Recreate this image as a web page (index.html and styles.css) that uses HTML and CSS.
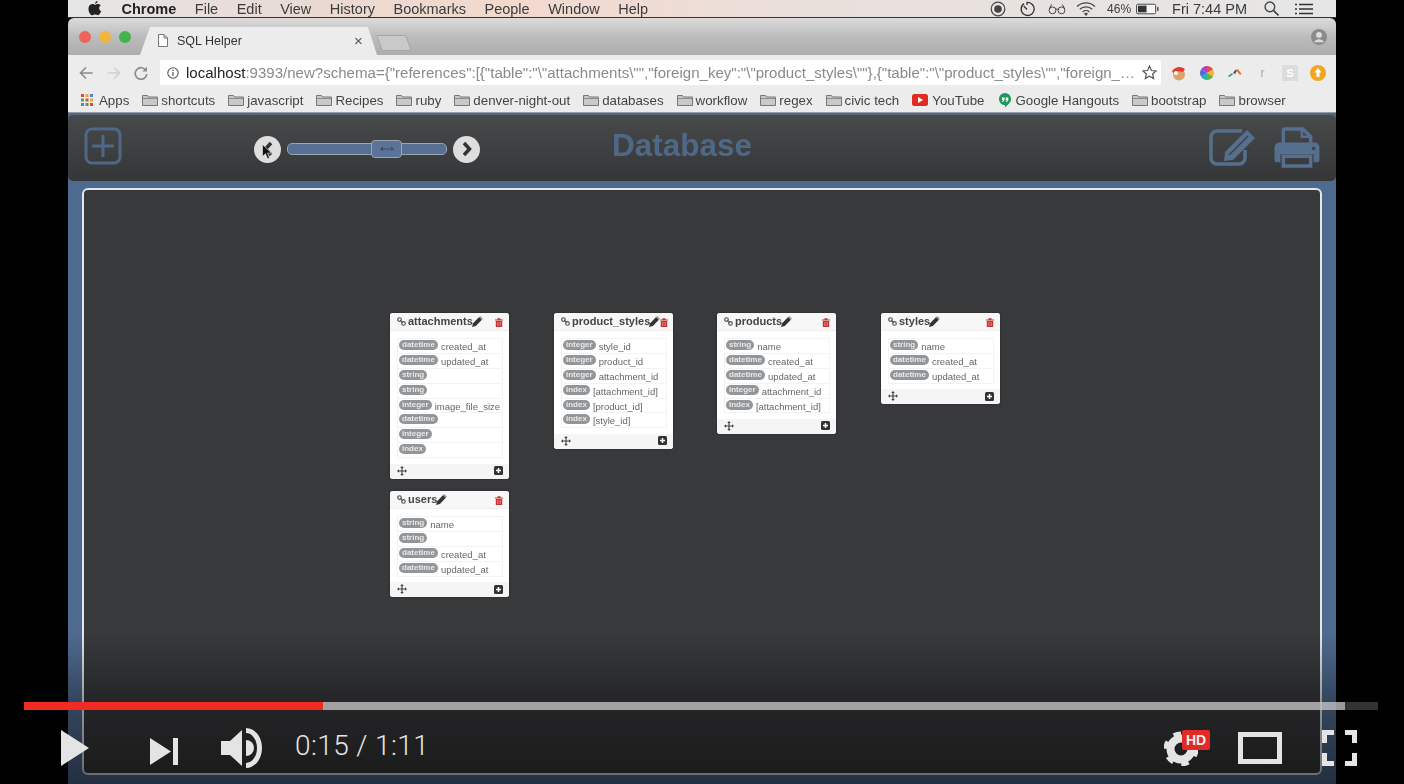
FILE: index.html
```html
<!DOCTYPE html>
<html lang="en">
<head>
    <meta charset="UTF-8">
    <title>SQL Helper</title>
    <link rel="stylesheet" href="styles.css">
</head>
<body>
    <svg class="defs" width="0" height="0">
        <symbol id="folder" viewBox="0 0 16 12"><path d="M.5 11.500V1.500h5l1 1.500h9v8.500z" fill="#c9c9c9" stroke="#777"/><path d="M1 4.500h14" stroke="#8d8d8d"/></symbol>
        <symbol id="link" viewBox="0 0 10 10"><circle cx="2.800" cy="2.800" r="2" fill="none" stroke="#555" stroke-width="1.300"/><circle cx="7.200" cy="7.200" r="2" fill="none" stroke="#555" stroke-width="1.300"/><path d="M3.500 3.500l3 3" stroke="#555" stroke-width="1.300"/></symbol>
        <symbol id="pencil" viewBox="0 0 10 10"><path d="M0 10l1-3.500L6.500 1 9 3.500 3.500 9z" fill="#333"/><path d="M7.500 0L10 2.500 9 3.500 6.500 1z" fill="#999"/></symbol>
        <symbol id="trash" viewBox="0 0 8 9"><path d="M0 1.500h8v1H0zM2.500.2h3v1.300h-3zM.8 3h6.400v6H.8z" fill="#c6322d"/><path d="M2.500 4v4M4 4v4M5.500 4v4" stroke="#e79a97" stroke-width=".6"/></symbol>
        <symbol id="move" viewBox="0 0 10 10"><path d="M5 0l1.800 2H5.600v2.400H8V3.200L10 5 8 6.800V5.600H5.600V8h1.200L5 10 3.200 8h1.200V5.600H2v1.200L0 5l2-1.800v1.200h2.400V2H3.200z" fill="#444"/></symbol>
        <symbol id="plus-box" viewBox="0 0 9 9"><rect width="9" height="9" rx="1.500" fill="#333"/><path d="M4.500 2v5M2 4.500h5" stroke="#fff" stroke-width="1.500"/></symbol>
    </svg>

    <div class="screen">
        <div class="menu-bar">
            <svg class="apple" viewBox="0 0 14 16"><path d="M9.800 0c.1 1.400-1.200 2.900-2.700 2.800C7 1.400 8.400.1 9.800 0zM7 4c.7 0 1.800-.9 3.200-.8 1.200 0 2.300.6 2.900 1.500-2.500 1.500-2.100 5 .6 6.100-.7 1.800-2.200 4.400-3.700 4.400-1 0-1.500-.7-2.800-.7s-1.900.7-2.800.7C2.400 15.700 0 11.800 0 8.500c0-3.200 2-5.100 4-5.200 1.200-.1 2.300.7 3 .7z" fill="#222"/></svg>
            <span class="menu-app">Chrome</span>
            <span>File</span>
            <span>Edit</span>
            <span>View</span>
            <span>History</span>
            <span>Bookmarks</span>
            <span>People</span>
            <span>Window</span>
            <span>Help</span>
            <div class="menu-status">
                <svg class="st-icon" viewBox="0 0 16 16"><circle cx="8" cy="8" r="6.800" fill="none" stroke="#444" stroke-width="1.200"/><circle cx="8" cy="8" r="3.800" fill="#444"/></svg>
                <svg class="st-icon st-timer" viewBox="0 0 16 16"><path d="M5 2.600A6.500 6.500 0 1 0 8 1.500V4" fill="none" stroke="#333" stroke-width="1.300"/><path d="M4.800 5L8 8.500" stroke="#333" stroke-width="1.300"/></svg>
                <svg class="st-glasses" viewBox="0 0 20 12"><circle cx="5" cy="7.500" r="3.800" fill="none" stroke="#444" stroke-width="1.100"/><circle cx="15" cy="7.500" r="3.800" fill="none" stroke="#444" stroke-width="1.100"/><path d="M8.500 6.500q1.500-1 3 0M1.500 6L4 1M18.500 6L16 1" fill="none" stroke="#444" stroke-width="1.100"/></svg>
                <svg class="st-wifi" viewBox="0 0 20 15"><path d="M1 5.500a13 13 0 0 1 18 0M3.800 8.300a9 9 0 0 1 12.400 0M6.600 11a5 5 0 0 1 6.800 0" fill="none" stroke="#444" stroke-width="1.200"/><path d="M10 15l-2-2.300a3 3 0 0 1 4 0z" fill="#444"/></svg>
                <span class="st-battery-label">46%</span>
                <svg class="st-battery" viewBox="0 0 24 12"><rect x=".5" y="1" width="20" height="10" rx="1.500" fill="#f4f4f4" stroke="#444"/><rect x="2" y="2.500" width="9" height="7" fill="#333"/><rect x="22" y="4" width="1.500" height="4" fill="#444"/></svg>
                <span class="st-clock">Fri 7:44 PM</span>
                <svg class="st-search" viewBox="0 0 14 14"><circle cx="5.500" cy="5.500" r="4.500" fill="none" stroke="#444" stroke-width="1.300"/><path d="M9 9l4.500 4.500" stroke="#444" stroke-width="1.500"/></svg>
                <svg class="st-list" viewBox="0 0 18 12"><path d="M4 1.500h14M4 6h14M4 10.500h14M0 1.500h2M0 6h2M0 10.500h2" stroke="#333" stroke-width="1.700"/></svg>
            </div>
        </div>

        <div class="tab-bar">
            <div class="traffic"><i class="red"></i><i class="yellow"></i><i class="green"></i></div>
            <div class="tab">
                <svg class="tab-file" viewBox="0 0 10 13"><path d="M.5.500h5.500l3.500 3.500v8.500h-9zM6 .5V4h3.500" fill="#fff" stroke="#777"/></svg>
                <span class="tab-title">SQL Helper</span>
                <span class="tab-close">×</span>
            </div>
            <div class="new-tab"></div>
            <svg class="profile" viewBox="0 0 14 14"><circle cx="7" cy="7" r="7" fill="#8b8b8b"/><circle cx="7" cy="5.200" r="2.500" fill="#ddd"/><path d="M2.800 11q4.200-4 8.400 0v.5H2.800z" fill="#ddd"/></svg>
        </div>

        <div class="toolbar">
            <svg class="nav-icon" viewBox="0 0 14 14"><path d="M13.500 7H2M7 1.500L1.500 7 7 12.500" fill="none" stroke="#8a8a8a" stroke-width="1.600"/></svg>
            <svg class="nav-icon nav-off" viewBox="0 0 14 14"><path d="M.5 7H12M7 1.500L12.500 7 7 12.500" fill="none" stroke="#d0d0d0" stroke-width="1.600"/></svg>
            <svg class="nav-icon" viewBox="0 0 14 14"><path d="M12 4.500A5.800 5.800 0 1 0 12.800 8" fill="none" stroke="#8a8a8a" stroke-width="1.600"/><path d="M13 .8v4.700H8.300z" fill="#8a8a8a"/></svg>
            <div class="address">
                <svg class="info" viewBox="0 0 12 12"><circle cx="6" cy="6" r="5.200" fill="none" stroke="#555" stroke-width="1.100"/><path d="M6 5v4M6 2.800v1.300" stroke="#555" stroke-width="1.200"/></svg>
                <div class="url"><b>localhost</b>:9393/new?schema={"references":[{"table":"\"attachments\"","foreign_key":"\"product_styles\""},{"table":"\"product_styles\"","foreign_…</div>
                <svg class="star" viewBox="0 0 14 14"><path d="M7 1l1.800 4.100 4.400.4-3.300 2.900 1 4.300L7 10.400l-3.900 2.300 1-4.300L.8 5.500l4.400-.4z" fill="none" stroke="#555" stroke-width="1.100"/></svg>
            </div>
            <div class="extensions">
                <svg class="ext" viewBox="0 0 16 16"><circle cx="8" cy="9.500" r="6" fill="#dca36b"/><path d="M1 6q6-7 13-2l-2 3q-5-2-10 1z" fill="#e23a2e"/><circle cx="5" cy="8" r="2" fill="#fff"/></svg>
                <svg class="ext" viewBox="0 0 16 16"><path d="M8 8L8 1a7 7 0 0 1 6 3.500z" fill="#e9483b"/><path d="M8 8l6-3.500a7 7 0 0 1 0 7z" fill="#f0b52c"/><path d="M8 8l6 3.500A7 7 0 0 1 8 15z" fill="#5fb548"/><path d="M8 8v7a7 7 0 0 1-6-3.500z" fill="#2fb0a5"/><path d="M8 8l-6 3.500a7 7 0 0 1 0-7z" fill="#3f71d6"/><path d="M8 8L2 4.500A7 7 0 0 1 8 1z" fill="#b23fc4"/></svg>
                <svg class="ext" viewBox="0 0 16 16"><path d="M1 11l4-3 1 1.500-4 2.500z" fill="#2a9a8a"/><path d="M6 8l2.500-3.500L10 6 8 9z" fill="#555"/><path d="M9 5l2-1 3.500 5-1.500 1z" fill="#e2703a"/></svg>
                <span class="ext-r">r</span>
                <span class="ext-s">S</span>
                <svg class="ext" viewBox="0 0 16 16"><circle cx="8" cy="8" r="8" fill="#f2a51f"/><path d="M8 3l3.500 4.500H9.500V12h-3V7.500H4.500z" fill="#fff"/></svg>
            </div>
        </div>

        <div class="bookmarks">
            <div class="bm bm-apps">
                <svg class="apps-grid" viewBox="0 0 12 12"><path d="M0 0h3v3H0z" fill="#e0483a"/><path d="M4.500 0h3v3h-3z" fill="#e9a825"/><path d="M9 0h3v3H9z" fill="#4a86e0"/><path d="M0 4.500h3v3H0z" fill="#4aa35a"/><path d="M4.500 4.500h3v3h-3z" fill="#e0483a"/><path d="M9 4.500h3v3H9z" fill="#e9a825"/><path d="M0 9h3v3H0z" fill="#4a86e0"/><path d="M4.500 9h3v3h-3z" fill="#4aa35a"/><path d="M9 9h3v3H9z" fill="#e0483a"/></svg>
                Apps
            </div>
            <div class="bm"><svg class="folder"><use href="#folder"/></svg>shortcuts</div>
            <div class="bm"><svg class="folder"><use href="#folder"/></svg>javascript</div>
            <div class="bm"><svg class="folder"><use href="#folder"/></svg>Recipes</div>
            <div class="bm"><svg class="folder"><use href="#folder"/></svg>ruby</div>
            <div class="bm"><svg class="folder"><use href="#folder"/></svg>denver-night-out</div>
            <div class="bm"><svg class="folder"><use href="#folder"/></svg>databases</div>
            <div class="bm"><svg class="folder"><use href="#folder"/></svg>workflow</div>
            <div class="bm"><svg class="folder"><use href="#folder"/></svg>regex</div>
            <div class="bm"><svg class="folder"><use href="#folder"/></svg>civic tech</div>
            <div class="bm"><svg class="bm-yt" viewBox="0 0 16 12"><rect width="16" height="12" rx="2.500" fill="#dd2c22"/><path d="M6 3l5 3-5 3z" fill="#fff"/></svg>YouTube</div>
            <div class="bm"><svg class="bm-hangouts" viewBox="0 0 14 16"><path d="M7 0a6.500 6.500 0 0 1 6.500 6.500C13.500 10 10 13 7 15.500V13A6.500 6.500 0 0 1 7 0z" fill="#1d9a5b"/><path d="M3.800 4.800h2.700v2.700L5 9.500H4l.7-2H3.800zM7.800 4.800h2.700v2.700L9 9.500H8l.7-2h-.9z" fill="#fff"/></svg>Google Hangouts</div>
            <div class="bm"><svg class="folder"><use href="#folder"/></svg>bootstrap</div>
            <div class="bm"><svg class="folder"><use href="#folder"/></svg>browser</div>
        </div>

        <div class="app">
            <div class="app-bar">
                <svg class="add-table" viewBox="0 0 38 38"><rect x="2" y="2" width="34" height="34" rx="6" fill="none" stroke="#4f6888" stroke-width="3"/><path d="M19 8v22M8 19h22" stroke="#4f6888" stroke-width="3"/></svg>
                <div class="slider">
                    <div class="slider-btn">
                        <svg class="chevron" viewBox="0 0 12 16"><path d="M9 2L3.500 8 9 14" fill="none" stroke="#333" stroke-width="3.500"/></svg>
                        <svg class="cursor" viewBox="0 0 10 16"><path d="M.5.500v12l3-2.800 2 5 2-.8-2-4.800h4z" fill="#111" stroke="#eee" stroke-width=".6"/></svg>
                    </div>
                    <div class="slider-track">
                        <div class="slider-handle"><svg viewBox="0 0 14 6" class="handle-arrows"><path d="M0 3l3-2.500V5zM14 3l-3-2.500V5zM2 2.600h10v.8H2z" fill="#3b4a5e"/></svg></div>
                    </div>
                    <div class="slider-btn">
                        <svg class="chevron" viewBox="0 0 12 16"><path d="M3 2l5.500 6L3 14" fill="none" stroke="#333" stroke-width="3.500"/></svg>
                    </div>
                </div>
                <h1 class="app-title">Database</h1>
                <div class="app-actions">
                    <svg class="edit-icon" viewBox="0 0 48 38"><path d="M33 3H8a6 6 0 0 0-6 6v21a6 6 0 0 0 6 6h22a6 6 0 0 0 6-6V22" fill="none" stroke="#55708f" stroke-width="3.500"/><path d="M16 24L38 2l8 8-22 22-9 1z" fill="#55708f"/><path d="M20 27l19-19" stroke="#3e4042" stroke-width="1.500"/></svg>
                    <svg class="print-icon" viewBox="0 0 46 42"><path d="M9 17V4a2 2 0 0 1 2-2h18l8 8v7" fill="none" stroke="#55708f" stroke-width="3.500"/><path d="M28 2v8h9" fill="none" stroke="#55708f" stroke-width="2.500"/><path d="M5 16h36a5 5 0 0 1 5 5v13a2 2 0 0 1-2 2h-4v-8H6v8H2a2 2 0 0 1-2-2V21a5 5 0 0 1 5-5z" fill="#55708f"/><path d="M9 30h28v10H9z" fill="none" stroke="#55708f" stroke-width="3.500"/><circle cx="40" cy="22" r="1.800" fill="#3e4042"/></svg>
                </div>
            </div>

            <div class="board-wrap">
                <div class="board">

                    <div class="node node-attachments">
                        <div class="node-head">
                            <svg class="ic-link"><use href="#link"/></svg><span class="node-name">attachments</span><svg class="ic-pencil"><use href="#pencil"/></svg>
                            <svg class="ic-trash"><use href="#trash"/></svg>
                        </div>
                        <div class="node-rows">
                            <div class="row"><span class="type">datetime</span><span class="col">created_at</span></div>
                            <div class="row"><span class="type">datetime</span><span class="col">updated_at</span></div>
                            <div class="row"><span class="type">string</span></div>
                            <div class="row"><span class="type">string</span></div>
                            <div class="row"><span class="type">integer</span><span class="col">image_file_size</span></div>
                            <div class="row"><span class="type">datetime</span></div>
                            <div class="row"><span class="type">integer</span></div>
                            <div class="row"><span class="type">index</span></div>
                        </div>
                        <div class="node-foot"><svg class="ic-move"><use href="#move"/></svg><svg class="ic-plus"><use href="#plus-box"/></svg></div>
                    </div>

                    <div class="node node-product-styles">
                        <div class="node-head">
                            <svg class="ic-link"><use href="#link"/></svg><span class="node-name">product_styles</span><svg class="ic-pencil"><use href="#pencil"/></svg>
                            <svg class="ic-trash"><use href="#trash"/></svg>
                        </div>
                        <div class="node-rows">
                            <div class="row"><span class="type">integer</span><span class="col">style_id</span></div>
                            <div class="row"><span class="type">integer</span><span class="col">product_id</span></div>
                            <div class="row"><span class="type">integer</span><span class="col">attachment_id</span></div>
                            <div class="row"><span class="type">index</span><span class="col">[attachment_id]</span></div>
                            <div class="row"><span class="type">index</span><span class="col">[product_id]</span></div>
                            <div class="row"><span class="type">index</span><span class="col">[style_id]</span></div>
                        </div>
                        <div class="node-foot"><svg class="ic-move"><use href="#move"/></svg><svg class="ic-plus"><use href="#plus-box"/></svg></div>
                    </div>

                    <div class="node node-products">
                        <div class="node-head">
                            <svg class="ic-link"><use href="#link"/></svg><span class="node-name">products</span><svg class="ic-pencil"><use href="#pencil"/></svg>
                            <svg class="ic-trash"><use href="#trash"/></svg>
                        </div>
                        <div class="node-rows">
                            <div class="row"><span class="type">string</span><span class="col">name</span></div>
                            <div class="row"><span class="type">datetime</span><span class="col">created_at</span></div>
                            <div class="row"><span class="type">datetime</span><span class="col">updated_at</span></div>
                            <div class="row"><span class="type">integer</span><span class="col">attachment_id</span></div>
                            <div class="row"><span class="type">index</span><span class="col">[attachment_id]</span></div>
                        </div>
                        <div class="node-foot"><svg class="ic-move"><use href="#move"/></svg><svg class="ic-plus"><use href="#plus-box"/></svg></div>
                    </div>

                    <div class="node node-styles">
                        <div class="node-head">
                            <svg class="ic-link"><use href="#link"/></svg><span class="node-name">styles</span><svg class="ic-pencil"><use href="#pencil"/></svg>
                            <svg class="ic-trash"><use href="#trash"/></svg>
                        </div>
                        <div class="node-rows">
                            <div class="row"><span class="type">string</span><span class="col">name</span></div>
                            <div class="row"><span class="type">datetime</span><span class="col">created_at</span></div>
                            <div class="row"><span class="type">datetime</span><span class="col">updated_at</span></div>
                        </div>
                        <div class="node-foot"><svg class="ic-move"><use href="#move"/></svg><svg class="ic-plus"><use href="#plus-box"/></svg></div>
                    </div>

                    <div class="node node-users">
                        <div class="node-head">
                            <svg class="ic-link"><use href="#link"/></svg><span class="node-name">users</span><svg class="ic-pencil"><use href="#pencil"/></svg>
                            <svg class="ic-trash"><use href="#trash"/></svg>
                        </div>
                        <div class="node-rows">
                            <div class="row"><span class="type">string</span><span class="col">name</span></div>
                            <div class="row"><span class="type">string</span></div>
                            <div class="row"><span class="type">datetime</span><span class="col">created_at</span></div>
                            <div class="row"><span class="type">datetime</span><span class="col">updated_at</span></div>
                        </div>
                        <div class="node-foot"><svg class="ic-move"><use href="#move"/></svg><svg class="ic-plus"><use href="#plus-box"/></svg></div>
                    </div>

                </div>
            </div>
        </div>
    </div>

    <div class="player">
        <div class="progress"><div class="progress-loaded"><div class="progress-played"></div></div></div>
        <div class="controls">
            <svg class="btn-play" viewBox="0 0 28 36"><path d="M0 0l28 18L0 36z"/></svg>
            <svg class="btn-next" viewBox="0 0 28 27"><path d="M0 0l21 13.500L0 27zM23 0h5v27h-5z"/></svg>
            <svg class="btn-volume" viewBox="0 0 41 40"><path d="M0 13h9L21 2v36L9 27H0z"/><path d="M25 12a8 8 0 0 1 0 16z"/><path d="M25 0a16 20 0 0 1 0 40v-5a11 15 0 0 0 0-30z"/></svg>
            <span class="time">0:15 / 1:11</span>
            <div class="controls-right">
                <div class="btn-settings">
                    <svg class="gear" viewBox="0 0 34 36"><circle cx="17" cy="19" r="10.500" fill="none" stroke="currentColor" stroke-width="8"/><circle cx="17" cy="19" r="15" fill="none" stroke="currentColor" stroke-width="5" stroke-dasharray="7.400 8.300"/></svg>
                    <span class="hd">HD</span>
                </div>
                <div class="btn-theater"></div>
                <svg class="btn-full" viewBox="0 0 35 36"><path d="M0 0h12v5H5v8H0zM23 0h12v13h-5V5h-7zM0 23h5v8h7v5H0zM30 23h5v13H23v-5h7z"/></svg>
            </div>
        </div>
    </div>
</body>
</html>
```

FILE: styles.css
```css
html, body {
    margin: 0;
    padding: 0;
    width: 1404px;
    height: 784px;
    overflow: hidden;
    background: #000;
    font-family: "Liberation Sans", Arial, sans-serif;
}

.defs {
    position: absolute;
}

/* the recording, soft like a compressed video */
.screen {
    width: 1268px;
    height: 784px;
    margin-left: 68px;
    display: flex;
    flex-direction: column;
    filter: blur(0.7px);
}

.menu-bar {
    height: 18px;
    flex: none;
    display: flex;
    align-items: center;
    gap: 18.500px;
    padding: 0 23px 0 20px;
    box-sizing: border-box;
    background: linear-gradient(90deg, #e6e6e6, #ead9d2 20%, #f3d9ce 35%, #e9e0dc 60%, #e6e6e6);
    border-bottom: 1px solid #333;
    font-size: 14.500px;
    color: #3c3c3c;
}

.apple {
    width: 14px;
    height: 15px;
    margin-right: 1px;
}

.menu-app {
    font-weight: bold;
    color: #222;
}

.menu-status {
    margin-left: auto;
    display: flex;
    align-items: center;
    font-size: 13px;
}

.st-icon {
    width: 16px;
    height: 16px;
    margin-right: 13px;
}

.st-glasses {
    width: 18px;
    height: 12px;
    margin-right: 10px;
}

.st-wifi {
    width: 20px;
    height: 15px;
    margin-right: 11px;
}

.st-battery-label {
    font-size: 12px;
    margin-right: 5px;
}

.st-battery {
    width: 23px;
    height: 12px;
    margin-right: 13px;
}

.st-clock {
    font-size: 14.500px;
    margin-right: 17px;
}

.st-search {
    width: 15px;
    height: 15px;
    margin-right: 16px;
}

.st-list {
    width: 18px;
    height: 12px;
}

.tab-bar {
    height: 37px;
    flex: none;
    display: flex;
    align-items: flex-end;
    position: relative;
    background: linear-gradient(#dcdcdc, #bcbcbc 50%, #adadad);
    border-radius: 6px 6px 0 0;
}

.traffic {
    position: absolute;
    left: 11px;
    top: 13px;
    display: flex;
    gap: 8px;
}

.traffic i {
    width: 12px;
    height: 12px;
    border-radius: 50%;
}

.traffic .red { background: #f0635a; }
.traffic .yellow { background: #f2b63c; }
.traffic .green { background: #41b44c; }

.tab {
    width: 237px;
    height: 28px;
    flex: none;
    margin-left: 72px;
    box-sizing: border-box;
    padding: 0 0 1px 18px;
    display: flex;
    align-items: center;
    font-size: 12.500px;
    color: #333;
    background: #ececec;
    clip-path: polygon(0 100%, 10px 0, 228px 0, 237px 100%);
}

.tab-file {
    width: 10px;
    height: 13px;
    margin-right: 9px;
    flex: none;
}

.tab-title {
    width: 177px;
    flex: none;
}

.tab-close {
    font-size: 15px;
    color: #555;
}

.new-tab {
    width: 28px;
    height: 14px;
    margin: 0 0 4px 2px;
    background: #c9c9c9;
    border: 1px solid #a5a5a5;
    transform: skewX(20deg);
    border-radius: 2px;
}

.profile {
    width: 16px;
    height: 16px;
    position: absolute;
    right: 9px;
    top: 11px;
}

.toolbar {
    height: 33px;
    flex: none;
    display: flex;
    align-items: center;
    box-sizing: border-box;
    padding: 2px 0 0 11px;
    background: #ececec;
}

.nav-icon {
    width: 14px;
    height: 14px;
    margin-right: 14px;
}

.nav-off {
    margin-right: 13px;
}

.address {
    width: 1001px;
    height: 25px;
    flex: none;
    margin-left: -2px;
    background: #fff;
    border-radius: 2px;
    display: flex;
    align-items: center;
    box-sizing: border-box;
    padding: 0 4px 0 7px;
}

.info {
    width: 12px;
    height: 12px;
    margin-right: 7px;
    flex: none;
}

.url {
    flex: 1;
    font-size: 15.050px;
    color: #8a8a8a;
    white-space: nowrap;
    overflow: hidden;
}

.url b {
    font-weight: normal;
    color: #222;
}

.star {
    width: 15px;
    height: 15px;
    flex: none;
}

.extensions {
    flex: 1;
    display: flex;
    align-items: center;
    justify-content: space-between;
    padding: 0 10px;
}

.ext {
    width: 16px;
    height: 16px;
}

.ext-r {
    width: 16px;
    font-size: 12px;
    color: #aaa;
    text-align: center;
}

.ext-s {
    width: 16px;
    height: 16px;
    line-height: 16px;
    background: #dcdcdc;
    color: #fff;
    font-size: 11px;
    font-weight: bold;
    text-align: center;
}

.bookmarks {
    height: 25px;
    flex: none;
    display: flex;
    align-items: center;
    gap: 13px;
    box-sizing: border-box;
    padding: 0 0 0 13px;
    background: #ececec;
    border-bottom: 1px solid #9a9a9a;
    font-size: 13.300px;
    color: #444;
}

.bm {
    display: flex;
    align-items: center;
    white-space: nowrap;
}

.apps-grid {
    width: 12px;
    height: 12px;
    margin-right: 6px;
}

.folder {
    width: 16px;
    height: 12px;
    margin-right: 3px;
}

.bm-yt {
    width: 16px;
    height: 12px;
    margin-right: 4px;
}

.bm-hangouts {
    width: 14px;
    height: 15px;
    margin-right: 4px;
}

.app {
    flex: 1;
    display: flex;
    flex-direction: column;
    background: #4f6a8f;
    min-height: 0;
}

.app-bar {
    height: 66px;
    flex: none;
    margin-top: 2px;
    box-sizing: border-box;
    padding: 0 16px;
    display: flex;
    align-items: center;
    background: linear-gradient(#47494b, #343638);
    border-radius: 5px;
}

.add-table {
    width: 38px;
    height: 38px;
    flex: none;
    margin-bottom: 4px;
}

.slider {
    width: 226px;
    flex: none;
    margin-left: 132px;
    display: flex;
    align-items: center;
    gap: 6px;
    padding-top: 2px;
}

.slider-btn {
    width: 27px;
    height: 27px;
    flex: none;
    border-radius: 50%;
    background: #dedede;
    position: relative;
    display: flex;
    align-items: center;
    justify-content: center;
}

.chevron {
    width: 12px;
    height: 16px;
}

.cursor {
    width: 10px;
    height: 16px;
    position: absolute;
    left: 8px;
    top: 8px;
}

.slider-track {
    flex: 1;
    height: 10px;
    background: #566f92;
    border: 1px solid #9aa4b2;
    border-radius: 5px;
    display: flex;
    align-items: center;
    justify-content: center;
    padding-left: 39px;
}

.slider-handle {
    width: 29px;
    height: 16px;
    flex: none;
    background: #5a7396;
    border: 1px solid #9aa4b2;
    border-radius: 4px;
    display: flex;
    align-items: center;
    justify-content: center;
}

.handle-arrows {
    width: 14px;
    height: 6px;
}

.app-title {
    margin: 0 0 5px 132px;
    font-size: 31.500px;
    font-weight: bold;
    color: #4f6888;
}

.app-actions {
    margin-left: auto;
    display: flex;
    align-items: center;
    gap: 17px;
    padding-bottom: 2px;
}

.edit-icon {
    width: 48px;
    height: 38px;
}

.print-icon {
    width: 46px;
    height: 41px;
}

.board-wrap {
    flex: 1;
    padding: 7px 14px 9px;
    min-height: 0;
    display: flex;
}

.board {
    flex: 1;
    position: relative;
    background: #38393b;
    border: 2px solid #e3e6ea;
    border-radius: 6px;
}

/* table nodes sit where the user dragged them */
.node {
    position: absolute;
    width: 119px;
    background: #fff;
    border-radius: 3px;
    box-shadow: 0 0 2px rgba(0, 0, 0, 0.4);
    display: flex;
    flex-direction: column;
}

.node-attachments { left: 306px; top: 123px; }
.node-product-styles { left: 470px; top: 123px; }
.node-products { left: 633px; top: 123px; }
.node-styles { left: 797px; top: 123px; }
.node-users { left: 306px; top: 301px; }

.node-head {
    height: 18px;
    box-sizing: border-box;
    padding: 0 6px 1px 7px;
    display: flex;
    align-items: center;
    background: #f7f7f7;
    border-bottom: 1px solid #efefef;
    border-radius: 3px 3px 0 0;
}

.node-name {
    font-size: 11px;
    font-weight: bold;
    color: #444;
    white-space: nowrap;
}

.ic-link {
    width: 9px;
    height: 9px;
    margin-right: 2px;
    flex: none;
}

.ic-pencil {
    width: 11px;
    height: 11px;
    flex: none;
    margin-left: -1px;
}

.ic-trash {
    width: 8px;
    height: 9px;
    margin-left: auto;
    margin-top: 2px;
    flex: none;
}

.node-rows {
    margin: 7px 6px 5.500px 7px;
    border-bottom: 1px solid #f3f3f3;
}

.row {
    height: 14.900px;
    box-sizing: border-box;
    display: flex;
    padding: 1px 0 0 1px;
    border: 1px solid #f3f3f3;
    border-bottom: none;
    font-size: 9.500px;
    color: #666;
    white-space: nowrap;
}

.type {
    height: 10px;
    line-height: 10px;
    padding: 0 3px;
    border-radius: 5px;
    background: #939699;
    color: #e8e8e8;
    font-size: 8px;
    font-weight: bold;
}

.col {
    margin-left: 3px;
    line-height: 12px;
    margin-top: 1px;
}

.node-foot {
    height: 15px;
    box-sizing: border-box;
    padding: 0 6px 1px 7px;
    display: flex;
    align-items: center;
    justify-content: space-between;
    background: #f5f5f5;
    border-radius: 0 0 3px 3px;
}

.ic-move {
    width: 10px;
    height: 10px;
}

.ic-plus {
    width: 9px;
    height: 9px;
}

/* youtube player chrome laid over the recording */
.player {
    position: absolute;
    left: 0;
    right: 0;
    bottom: 0;
    height: 150px;
    background: linear-gradient(rgba(0, 0, 0, 0), rgba(0, 0, 0, 0.35) 45%, rgba(0, 0, 0, 0.55));
}

.progress {
    position: absolute;
    left: 24px;
    right: 26px;
    top: 68px;
    height: 8px;
    background: rgba(255, 255, 255, 0.2);
}

.progress-loaded {
    width: 1321px;
    height: 8px;
    background: rgba(190, 190, 190, 0.75);
}

.progress-played {
    width: 299px;
    height: 8px;
    background: #f12b24;
}

.controls {
    position: absolute;
    left: 61px;
    right: 47px;
    top: 94px;
    height: 40px;
    display: flex;
    align-items: center;
    fill: #e4e4e4;
    color: #e4e4e4;
}

.btn-play {
    width: 28px;
    height: 36px;
    margin-right: 61px;
}

.btn-next {
    width: 28px;
    height: 27px;
    margin: 6px 43px 0 0;
}

.btn-volume {
    width: 41px;
    height: 40px;
    margin-right: 33px;
}

.time {
    font-family: Roboto, sans-serif;
    font-size: 28px;
    font-weight: 300;
    letter-spacing: 0.4px;
    margin-top: -6px;
}

.controls-right {
    margin-left: auto;
    display: flex;
    align-items: center;
}

.btn-settings {
    width: 46px;
    height: 36px;
    position: relative;
    margin-right: 28px;
}

.gear {
    width: 34px;
    height: 36px;
    position: absolute;
    left: 0;
    top: 0;
}

.hd {
    position: absolute;
    left: 18px;
    top: 0;
    width: 28px;
    height: 20px;
    line-height: 20px;
    background: #e02a25;
    border-radius: 2px;
    color: #eee;
    font-size: 14px;
    font-weight: bold;
    text-align: center;
}

.btn-theater {
    width: 44px;
    height: 32px;
    box-sizing: border-box;
    border: 5px solid #e4e4e4;
    margin-right: 40px;
}

.btn-full {
    width: 35px;
    height: 36px;
}
```
